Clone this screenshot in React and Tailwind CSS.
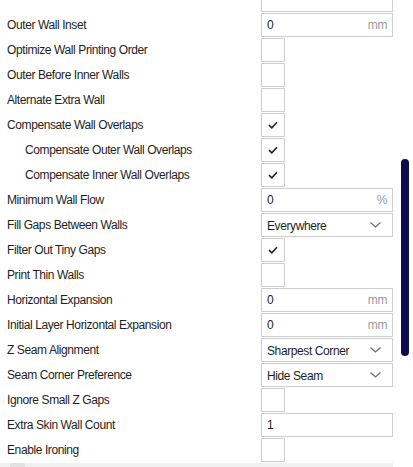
import React from 'react'

const rows = [
  { label: '', type: 'input', value: '', hidden: true },
  { label: 'Outer Wall Inset', type: 'input', value: '0', unit: 'mm' },
  { label: 'Optimize Wall Printing Order', type: 'check' },
  { label: 'Outer Before Inner Walls', type: 'check' },
  { label: 'Alternate Extra Wall', type: 'check' },
  { label: 'Compensate Wall Overlaps', type: 'check', checked: true },
  { label: 'Compensate Outer Wall Overlaps', type: 'check', checked: true, indent: true },
  { label: 'Compensate Inner Wall Overlaps', type: 'check', checked: true, indent: true },
  { label: 'Minimum Wall Flow', type: 'input', value: '0', unit: '%' },
  { label: 'Fill Gaps Between Walls', type: 'select', value: 'Everywhere' },
  { label: 'Filter Out Tiny Gaps', type: 'check', checked: true },
  { label: 'Print Thin Walls', type: 'check' },
  { label: 'Horizontal Expansion', type: 'input', value: '0', unit: 'mm' },
  { label: 'Initial Layer Horizontal Expansion', type: 'input', value: '0', unit: 'mm' },
  { label: 'Z Seam Alignment', type: 'select', value: 'Sharpest Corner' },
  { label: 'Seam Corner Preference', type: 'select', value: 'Hide Seam' },
  { label: 'Ignore Small Z Gaps', type: 'check' },
  { label: 'Extra Skin Wall Count', type: 'input', value: '1' },
  { label: 'Enable Ironing', type: 'check' },
]

function Check() {
  return (
    <svg width="10" height="8" viewBox="0 0 10 8" fill="none">
      <path d="M1 4.2 L3.8 6.8 L9 1.2" stroke="#222" strokeWidth="1.6" />
    </svg>
  )
}

function Chevron() {
  return (
    <svg width="11" height="6" viewBox="0 0 11 6" fill="none">
      <path d="M0.5 0.5 L5.5 5 L10.5 0.5" stroke="#6f6f6f" strokeWidth="1.3" />
    </svg>
  )
}

function Control({ row }) {
  if (row.type === 'check') {
    return (
      <div className="w-6 h-6 border border-[#cdcdcd] bg-white flex items-center justify-center">
        {row.checked && <Check />}
      </div>
    )
  }
  if (row.type === 'select') {
    return (
      <div className="w-[132px] h-6 border border-[#cdcdcd] bg-white flex items-center justify-between pl-[5px] pr-[11px] text-[#1e1e1e]">
        <span className="pt-px">{row.value}</span>
        <Chevron />
      </div>
    )
  }
  return (
    <div className="w-[132px] h-6 border border-[#cdcdcd] bg-white flex items-center justify-between pl-[5px] pr-[5px] text-[#1e1e1e]">
      <span>{row.value}</span>
      {row.unit && <span className="text-[#9a9a9a]">{row.unit}</span>}
    </div>
  )
}

export default function App() {
  return (
    <div className="relative w-[413px] h-[467px] overflow-hidden bg-white text-[12px] tracking-[-0.4px] font-['Liberation_Sans',Arial,sans-serif]">
      <div className="-mt-[12px] flex flex-col">
        {rows.map((row, idx) => (
          <div key={idx} className="flex h-[25px]">
            <div className={`h-6 flex items-center text-[#1e1e1e] w-[261px] ${row.indent ? 'pl-[25px]' : 'pl-[7px]'}`}>
              {row.label}
            </div>
            <Control row={row} />
          </div>
        ))}
      </div>
      <div className="absolute left-0 top-[463px] w-[393px] h-[4px] bg-[#f0f0f0]">
        <div className="ml-[10px] w-[15px] h-full bg-[#e2e2e2]" />
      </div>
      <div className="absolute left-[401px] top-[159px] w-2 h-[197px] rounded-full bg-[#0c0c4e]" />
    </div>
  )
}
